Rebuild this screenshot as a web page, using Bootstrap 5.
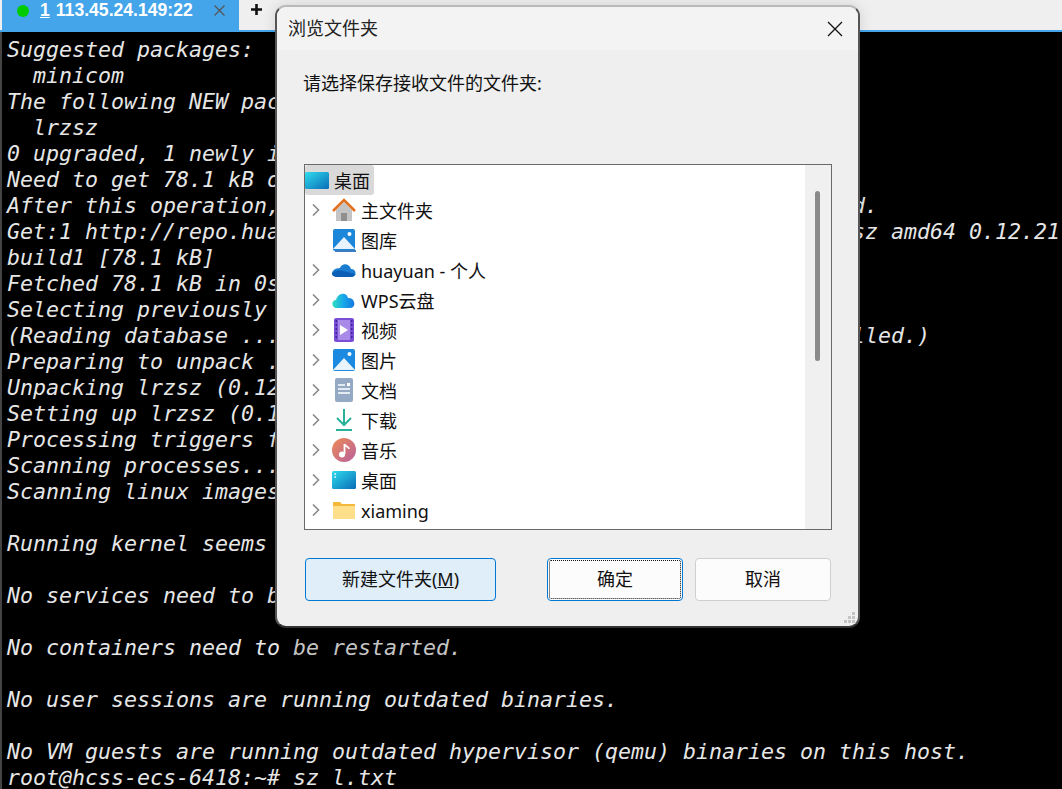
<!DOCTYPE html>
<html lang="zh"><head><meta charset="utf-8"><title>浏览文件夹</title>
<link href="https://cdn.jsdelivr.net/npm/bootstrap@5.3.0/dist/css/bootstrap.min.css" rel="stylesheet">
<style>
html,body{height:789px;overflow:hidden;background:#000}
.app{height:789px;width:1062px;position:relative;overflow:hidden;background:#000}
.tabbar{height:32px;background:#efefef;border-bottom:2px solid #45a5ea;font-family:"Liberation Sans","Noto Sans CJK SC",sans-serif}
.sess{width:237px;height:32px;margin-left:2px;background:#45a5ea;color:#fff;font-size:17.6px;font-weight:700;padding:0 0 11px 15px;margin-bottom:-2px}
.sdot{width:12px;height:12px;border-radius:50%;background:#00cc00;margin-right:11px}
.snum{margin-right:6px}
.sclose{margin-left:21px}
.plusic{margin:4px 0 0 12px}
.term{margin:0;padding:5px 0 0 5px;background:#000;color:#e6e6e6;font-family:"DejaVu Sans Mono",monospace;font-size:21.6px;line-height:26px;font-style:italic;white-space:pre;overflow:hidden;height:757px;border-left:2px solid #444}
.gap44{display:inline-block;width:572px}
.dimtxt{color:#c4c4c4}
.dlg{position:absolute;left:275px;top:5px;width:585px;height:623px;background:#efefef;border-radius:11px;border:2px solid #b9b9b9;border-right-color:#555;border-bottom-color:#333;border-left-color:#555;font-family:"Noto Sans","Noto Sans CJK SC",sans-serif;color:#111;font-size:18px;box-shadow:0 0 14px rgba(0,0,0,.12)}
.dtitle{height:43px;background:#f3f3f3;border-radius:9px 9px 0 0;padding:0 0 0 11px;color:#222}
.dx{margin-right:15px}
.dprompt{padding:20px 0 0 26px;height:114px;line-height:26px}
.tree{margin-left:27px;width:528px;height:366px;background:#fff;border:1px solid #6a6a6a;overflow:hidden}
.tlist{flex:1 1 auto;min-width:0}
.trow{height:30px;padding-left:6px;line-height:28px;white-space:nowrap}
.trow span:last-child{padding-top:2px}
.chev{width:12px;margin-right:9px;flex:none}
.ticon{width:24px;height:24px;margin-right:5px;flex:none}
.tsel{background:#d9d9d9;border-radius:3px;width:69px;padding-left:0}
.tsel .ticon{margin-right:5px}
.sb{width:26px;background:#f0f0f0;flex:none;position:relative}
.sbt{position:absolute;left:10px;top:26px;width:5px;height:170px;background:#8a8a8a;border-radius:3px}
.dbtns{margin:28px 27px 0 28px}
.wbtn{height:43px;border-radius:4px;font-size:18px;line-height:26px;color:#111;background:#fcfcfc;border:1px solid #cfcfcf;padding:0 0 1px}
.bnew{width:191px;background:#e0eef9;border-color:#0078d4}
.bok{width:136px;margin-left:auto;border-color:#0078d4;margin-right:12px;position:relative}
.bok::after{content:"";position:absolute;inset:1px;border:1px dotted #111;border-radius:2px}
.bno{width:136px}
.grip{position:absolute;right:1px;bottom:1px}
</style></head><body>
<div class="app">
<div class="tabbar d-flex align-items-start">
<div class="sess d-flex align-items-center"><span class="sdot"></span><u class="snum">1</u><span>113.45.24.149:22</span><svg class="sclose" width="11" height="11" viewBox="0 0 11 11"><path d="M.5 .5L10.500 10.500M10.500 .5L.5 10.500" stroke="#555" stroke-width="1.300" fill="none"/></svg></div>
<svg class="plusic" width="11" height="11" viewBox="0 0 11 11"><path d="M5.500 0V11M0 5.500H11" stroke="#111" stroke-width="2.600"/></svg>
</div>
<pre class="term">Suggested packages:
  minicom
The following NEW pac
  lrzsz
0 upgraded, 1 newly i
Need to get 78.1 kB o
After this operation,<span class="gap44"></span>d.
Get:1 http://repo.hua<span class="gap44"></span>sz amd64 0.12.21
build1 [78.1 kB]
Fetched 78.1 kB in 0s
Selecting previously
(Reading database ...<span class="gap44"></span>lled.)
Preparing to unpack .
Unpacking lrzsz (0.12
Setting up lrzsz (0.1
Processing triggers f
Scanning processes...
Scanning linux images

Running kernel seems

No services need to b

No containers need to <span class="dimtxt">be restarted.</span>

No user sessions are running outdated binaries.

No VM guests are running outdated hypervisor (qemu) binaries on this host.
root@hcss-ecs-6418:~# sz l.txt</pre>
<div class="dlg d-flex flex-column">
<div class="dtitle d-flex align-items-center justify-content-between"><span>浏览文件夹</span>
<svg class="dx" width="16" height="16" viewBox="0 0 16 16"><path d="M1 1L15 15M15 1L1 15" stroke="#111" stroke-width="1.300" fill="none"/></svg></div>
<div class="dprompt">请选择保存接收文件的文件夹:</div>
<div class="tree d-flex">
<div class="tlist">
<div class="trow tsel d-flex align-items-center"><svg class="ticon" viewBox="0 0 24 24"><defs><linearGradient id="dk" x1="0" y1="0" x2="1" y2="1"><stop offset="0" stop-color="#2fdcec"/><stop offset="1" stop-color="#0a6cb8"/></linearGradient></defs><rect x="0" y="4" width="24" height="17" rx="1.500" fill="url(#dk)"/></svg><span>桌面</span></div>
<div class="trow d-flex align-items-center"><svg class="chev" viewBox="0 0 12 12"><path d="M2 .5L7.500 6L2 11.500" stroke="#8a8a8a" stroke-width="1.600" fill="none"/></svg><svg class="ticon" viewBox="0 0 24 24"><path d="M4 12V23H20V12L12 4Z" fill="#c4c4c4"/><rect x="9" y="15" width="6" height="8" fill="#8f8f8f"/><path d="M1 13L12 2L23 13" stroke="#e0701e" stroke-width="2.600" fill="none"/></svg><span>主文件夹</span></div>
<div class="trow d-flex align-items-center"><span class="chev"></span><svg class="ticon" viewBox="0 0 24 24"><rect x="1" y="1" width="22" height="22" rx="2" fill="#1c86d8"/><path d="M1 21L12 9L23 21V21H1Z" fill="#e6f3fc"/><circle cx="17.500" cy="6" r="2" fill="#fff"/><rect x="3" y="22" width="21" height="2" fill="#3c7cc0"/></svg><span>图库</span></div>
<div class="trow d-flex align-items-center"><svg class="chev" viewBox="0 0 12 12"><path d="M2 .5L7.500 6L2 11.500" stroke="#8a8a8a" stroke-width="1.600" fill="none"/></svg><svg class="ticon" viewBox="0 0 24 24"><path d="M6 19H19C25 19 25 11 19 11C17 5 10 5 8 10C3 10 0 13 0 15.500C0 17.500 2 19 6 19Z" fill="#1b7dd0"/><path d="M0 15.500C0 17.500 2 19 6 19H19C21.500 19 23 17.500 23.600 16L11 13C7 12 3 12.500 0 15.500Z" fill="#0a5fb4"/></svg><span>huayuan - 个人</span></div>
<div class="trow d-flex align-items-center"><svg class="chev" viewBox="0 0 12 12"><path d="M2 .5L7.500 6L2 11.500" stroke="#8a8a8a" stroke-width="1.600" fill="none"/></svg><svg class="ticon" viewBox="0 0 24 24"><defs><linearGradient id="wp" x1="0" y1="0" x2="1" y2="0"><stop offset="0" stop-color="#2fe0c0"/><stop offset=".5" stop-color="#17a8ea"/><stop offset="1" stop-color="#1477e0"/></linearGradient></defs><path d="M5 20C-1 20-1 12 4 12C6 4 15 4 16 10C23 9 25 20 18 20Z" fill="url(#wp)"/></svg><span>WPS云盘</span></div>
<div class="trow d-flex align-items-center"><svg class="chev" viewBox="0 0 12 12"><path d="M2 .5L7.500 6L2 11.500" stroke="#8a8a8a" stroke-width="1.600" fill="none"/></svg><svg class="ticon" viewBox="0 0 24 24"><rect x="2" y="0" width="20" height="24" rx="2" fill="#7a4fd6"/><rect x="6" y="2" width="12" height="20" fill="#a98ae8"/><path d="M8 7L16 12L8 17Z" fill="#fff"/><path d="M3.500 3h1.500M3.500 7h1.500M3.500 11h1.500M3.500 15h1.500M3.500 19h1.500M19 3h1.500M19 7h1.500M19 11h1.500M19 15h1.500M19 19h1.500" stroke="#3e2498" stroke-width="2"/></svg><span>视频</span></div>
<div class="trow d-flex align-items-center"><svg class="chev" viewBox="0 0 12 12"><path d="M2 .5L7.500 6L2 11.500" stroke="#8a8a8a" stroke-width="1.600" fill="none"/></svg><svg class="ticon" viewBox="0 0 24 24"><rect x="1" y="1" width="22" height="22" rx="2" fill="#1c8ae0"/><path d="M1 22L12 10L23 22Z" fill="#e9f4fc"/><circle cx="17.500" cy="6" r="2" fill="#fff"/></svg><span>图片</span></div>
<div class="trow d-flex align-items-center"><svg class="chev" viewBox="0 0 12 12"><path d="M2 .5L7.500 6L2 11.500" stroke="#8a8a8a" stroke-width="1.600" fill="none"/></svg><svg class="ticon" viewBox="0 0 24 24"><rect x="3" y="0" width="18" height="24" rx="2" fill="#93a9c4"/><path d="M6 7h7M6 11h12M6 15h12" stroke="#fff" stroke-width="1.400"/><rect x="15" y="5" width="3" height="3" fill="#fff"/></svg><span>文档</span></div>
<div class="trow d-flex align-items-center"><svg class="chev" viewBox="0 0 12 12"><path d="M2 .5L7.500 6L2 11.500" stroke="#8a8a8a" stroke-width="1.600" fill="none"/></svg><svg class="ticon" viewBox="0 0 24 24"><path d="M12 1V17M5 10L12 17L19 10" stroke="#27b39a" stroke-width="2" fill="none"/><path d="M4 22H20" stroke="#27b39a" stroke-width="2"/></svg><span>下载</span></div>
<div class="trow d-flex align-items-center"><svg class="chev" viewBox="0 0 12 12"><path d="M2 .5L7.500 6L2 11.500" stroke="#8a8a8a" stroke-width="1.600" fill="none"/></svg><svg class="ticon" viewBox="0 0 24 24"><defs><linearGradient id="mu" x1="0" y1="0" x2="1" y2="1"><stop offset="0" stop-color="#ee8a55"/><stop offset="1" stop-color="#b8609e"/></linearGradient></defs><circle cx="12" cy="12" r="12" fill="url(#mu)"/><path d="M12.500 6V16" stroke="#fff" stroke-width="1.800"/><circle cx="10" cy="16.500" r="3" fill="#fff"/><path d="M12.500 6C13 9 17 8 17 11" stroke="#fff" stroke-width="1.800" fill="none"/></svg><span>音乐</span></div>
<div class="trow d-flex align-items-center"><svg class="chev" viewBox="0 0 12 12"><path d="M2 .5L7.500 6L2 11.500" stroke="#8a8a8a" stroke-width="1.600" fill="none"/></svg><svg class="ticon" viewBox="0 0 24 24"><rect x="0" y="3" width="24" height="18" rx="1.500" fill="url(#dk)"/><path d="M2.500 6h1.500M2.500 9h1.500" stroke="#fff" stroke-width="1.500"/></svg><span>桌面</span></div>
<div class="trow d-flex align-items-center"><svg class="chev" viewBox="0 0 12 12"><path d="M2 .5L7.500 6L2 11.500" stroke="#8a8a8a" stroke-width="1.600" fill="none"/></svg><svg class="ticon" viewBox="0 0 24 24"><path d="M1 4H8L10 6H23V20H1Z" fill="#f5b83a"/><rect x="1" y="8" width="22" height="13" fill="#ffdf8a"/></svg><span>xiaming</span></div>
</div>
<div class="sb"><div class="sbt"></div></div>
</div>
<div class="dbtns d-flex">
<button class="btn wbtn bnew" type="button">新建文件夹(<u>M</u>)</button>
<button class="btn wbtn bok" type="button">确定</button>
<button class="btn wbtn bno" type="button">取消</button>
</div>
<svg class="grip" width="14" height="14" viewBox="0 0 14 14"><path d="M9 1h3v3H9zM5 5h3v3H5zM9 5h3v3H9zM1 9h3v3H1zM5 9h3v3H5zM9 9h3v3H9z" fill="#c4c4c4"/></svg>
</div>
</div>
<script src="https://cdn.jsdelivr.net/npm/bootstrap@5.3.0/dist/js/bootstrap.bundle.min.js"></script>
</body></html>
